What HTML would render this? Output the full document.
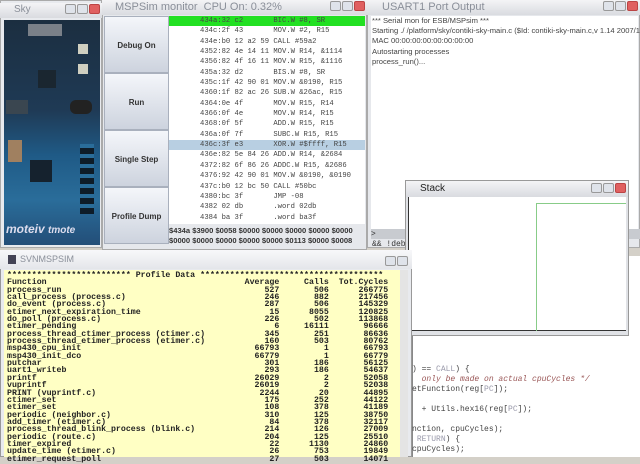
<!DOCTYPE html>
<html><head><meta charset="utf-8"><style>
*{margin:0;padding:0;box-sizing:border-box}
body{width:640px;height:457px;overflow:hidden;background:#d4d0c8;position:relative;font-family:"Liberation Sans",sans-serif}
.abs{position:absolute}
.tb{position:absolute;background:linear-gradient(#f4f4f6,#d9dbe0);color:#8a8f99;font-size:10px;padding-left:14px;line-height:14px}
.btns span{display:inline-block;width:11px;height:10px;margin-left:1px;border:1px solid #999;background:#dfe3ea;border-radius:2px}
.btns span.x{background:#e06060;border-color:#b44}
.code{font-family:"Liberation Mono",monospace;font-size:7.2px;color:#444}
.btn{position:absolute;left:104px;width:65px;height:57px;background:linear-gradient(#f4f6fa,#cdd3de);border:1px solid #a9b0bd;font-size:8px;font-weight:bold;color:#333;text-align:center;line-height:57px}
.prof{font-family:"Liberation Mono",monospace;font-weight:bold;font-size:8.25px;line-height:7.35px;color:#222;white-space:pre}
</style></head><body>
<!-- Sky -->
<div class="abs" style="left:0;top:0;width:102px;height:248px;background:#e8eaee;border:1px solid #aaa"></div>
<div class="tb" style="left:0;top:3px;width:102px;height:15px">Sky<div class="btns abs" style="right:2px;top:1px"><span></span><span></span><span class="x"></span></div></div>
<div class="abs" style="left:4px;top:20px;width:96px;height:225px;background:linear-gradient(#1b2e40 0%,#1f3a55 40%,#1f5a86 60%,#2a6d9a 80%,#234e78 100%)"></div>
<div class="abs" style="left:28px;top:24px;width:34px;height:12px;background:#7a8088"></div>
<div class="abs" style="left:6px;top:100px;width:22px;height:14px;background:#3a4650"></div>
<div class="abs" style="left:38px;top:70px;width:18px;height:18px;background:#1a2630"></div>
<div class="abs" style="left:78px;top:44px;width:10px;height:10px;background:#cfcfc0"></div>
<div class="abs" style="left:78px;top:64px;width:10px;height:10px;background:#cfcfc0"></div>
<div class="abs" style="left:70px;top:100px;width:22px;height:14px;background:#222;border-radius:6px"></div>
<div class="abs" style="left:8px;top:140px;width:14px;height:22px;background:#a08060"></div>
<div class="abs" style="left:30px;top:160px;width:22px;height:22px;background:#15222e"></div>
<div class="abs" style="left:80px;top:144px;width:14px;height:70px;background:repeating-linear-gradient(#2a6d9a 0 4px,#0e1c28 4px 10px)"></div>
<div class="abs" style="left:6px;top:222px;font:italic bold 12px 'Liberation Sans';color:#dde">moteiv <span style="font-size:10px">tmote</span></div>
<!-- MSPSim -->
<div class="abs" style="left:102px;top:0;width:265px;height:250px;background:#e6e8ec;border:1px solid #aaa"></div>
<div class="tb" style="left:102px;top:0;width:265px;height:15px;font-size:11px;padding-left:13px">MSPSim monitor&nbsp; CPU On: 0.32%<div class="btns abs" style="right:2px;top:1px"><span></span><span></span><span class="x"></span></div></div>
<div class="btn" style="top:16px">Debug On</div>
<div class="btn" style="top:73px">Run</div>
<div class="btn" style="top:130px">Single Step</div>
<div class="btn" style="top:187px">Profile Dump</div>
<div class="abs" style="left:169px;top:16px;width:196px;height:208px;background:#fff"></div>
<div class="abs" style="left:169px;top:16px;width:196px;height:10px;background:#22e022"></div>
<div class="abs" style="left:169px;top:140px;width:196px;height:10px;background:#b8cfe2"></div>
<div class="abs code" style="left:200px;top:16px;line-height:10.35px;white-space:pre">434a:32 c2       BIC.W #8, SR
434c:2f 43       MOV.W #2, R15
434e:b0 12 a2 59 CALL #59a2
4352:82 4e 14 11 MOV.W R14, &amp;1114
4356:82 4f 16 11 MOV.W R15, &amp;1116
435a:32 d2       BIS.W #8, SR
435c:1f 42 90 01 MOV.W &amp;0190, R15
4360:1f 82 ac 26 SUB.W &amp;26ac, R15
4364:0e 4f       MOV.W R15, R14
4366:0f 4e       MOV.W R14, R15
4368:0f 5f       ADD.W R15, R15
436a:0f 7f       SUBC.W R15, R15
436c:3f e3       XOR.W #$ffff, R15
436e:82 5e 84 26 ADD.W R14, &amp;2684
4372:82 6f 86 26 ADDC.W R15, &amp;2686
4376:92 42 90 01 MOV.W &amp;0190, &amp;0190
437c:b0 12 bc 50 CALL #50bc
4380:bc 3f       JMP -08
4382 02 db       .word 02db
4384 ba 3f       .word ba3f</div>
<div class="abs" style="left:169px;top:226px;font:bold 7.6px/10px 'Liberation Sans';color:#333;white-space:pre">$434a $3900 $0058 $0000 $0000 $0000 $0000 $0000
$0000 $0000 $0000 $0000 $0000 $0113 $0000 $0008</div>
<!-- USART -->
<div class="abs" style="left:367px;top:0;width:273px;height:248px;background:#e6e8ec;border:1px solid #aaa"></div>
<div class="tb" style="left:367px;top:0;width:273px;height:15px;font-size:11px;padding-left:15px">USART1 Port Output<div class="btns abs" style="right:2px;top:1px"><span></span><span></span><span class="x"></span></div></div>
<div class="abs" style="left:371px;top:16px;width:267px;height:213px;background:#fff;font-size:7.6px;line-height:10.2px;color:#444;padding:0 0 0 1px;white-space:pre">*** Serial mon for ESB/MSPsim ***
Starting ./ /platform/sky/contiki-sky-main.c ($Id: contiki-sky-main.c,v 1.14 2007/1
MAC 00:00:00:00:00:00:00:00
Autostarting processes
process_run()...</div>
<div class="abs" style="left:371px;top:229px;width:269px;height:10px;background:#c8cbd0;font-size:8px;line-height:10px;color:#333">&gt;</div>
<div class="abs" style="left:372px;top:240px;font:8px 'Liberation Mono';color:#333">&amp;&amp; !deb</div>
<!-- code editor behind -->
<div class="abs" style="left:412px;top:256px;width:228px;height:201px;background:#fff;border-left:1px solid #888"></div>
<div class="abs code" style="left:412px;top:365px;line-height:10px;white-space:pre;font-size:8px">) == <span style="color:#99a">CALL</span>) {
  <i style="color:#955">only be made on actual cpuCycles */</i>
etFunction(reg[<span style="color:#99a">PC</span>]);

  + Utils.hex16(reg[<span style="color:#99a">PC</span>]);

nction, cpuCycles);
 <span style="color:#99a">RETURN</span>) {
cpuCycles);</div>
<!-- Stack -->
<div class="abs" style="left:405px;top:180px;width:224px;height:156px;background:#e0e2e6;border:1px solid #999"></div>
<div class="tb" style="left:406px;top:181px;width:222px;height:16px;font-size:10px;color:#222;line-height:16px;padding-left:14px">Stack<div class="btns abs" style="right:2px;top:2px"><span></span><span></span><span class="x"></span></div></div>
<div class="abs" style="left:408px;top:197px;width:218px;height:134px;background:#fff;border-left:1px solid #333;border-bottom:1px solid #333"></div>
<div class="abs" style="left:536px;top:203px;width:90px;height:128px;border-left:1px solid #8c8;border-top:1px solid #8c8"></div>
<!-- Console -->
<div class="abs" style="left:0;top:250px;width:412px;height:207px;background:#e8eaee;border:1px solid #999"></div>
<div class="abs" style="left:0;top:250px;width:412px;height:19px;background:linear-gradient(#f8f8fa,#e4e6ea);font-size:9px;color:#8a8f99;line-height:19px;padding-left:20px">SVNMSPSIM<div class="abs" style="left:8px;top:5px;width:8px;height:9px;background:#445"></div><div class="btns abs" style="right:4px;top:4px"><span></span><span></span></div></div>
<div class="abs" style="left:4px;top:270px;width:396px;height:187px;background:#ffffc4"></div>
<div class="abs" style="left:400px;top:270px;width:8px;height:187px;background:#e4e4e4"></div>
<div class="abs prof" style="left:7px;top:272px">************************* Profile Data *************************************
Function                                        Average     Calls  Tot.Cycles
process_run                                         527       506      266775
call_process (process.c)                            246       882      217456
do_event (process.c)                                287       506      145329
etimer_next_expiration_time                          15      8055      120825
do_poll (process.c)                                 226       502      113868
etimer_pending                                        6     16111       96666
process_thread_ctimer_process (ctimer.c)            345       251       86636
process_thread_etimer_process (etimer.c)            160       503       80762
msp430_cpu_init                                   66793         1       66793
msp430_init_dco                                   66779         1       66779
putchar                                             301       186       56125
uart1_writeb                                        293       186       54637
printf                                            26029         2       52058
vuprintf                                          26019         2       52038
PRINT (vuprintf.c)                                 2244        20       44895
ctimer_set                                          175       252       44122
etimer_set                                          108       378       41189
periodic (neighbor.c)                               310       125       38750
add_timer (etimer.c)                                 84       378       32117
process_thread_blink_process (blink.c)              214       126       27009
periodic (route.c)                                  204       125       25510
timer_expired                                        22      1130       24860
update_time (etimer.c)                               26       753       19849
etimer_request_poll                                  27       503       14071</div>
</body></html>
